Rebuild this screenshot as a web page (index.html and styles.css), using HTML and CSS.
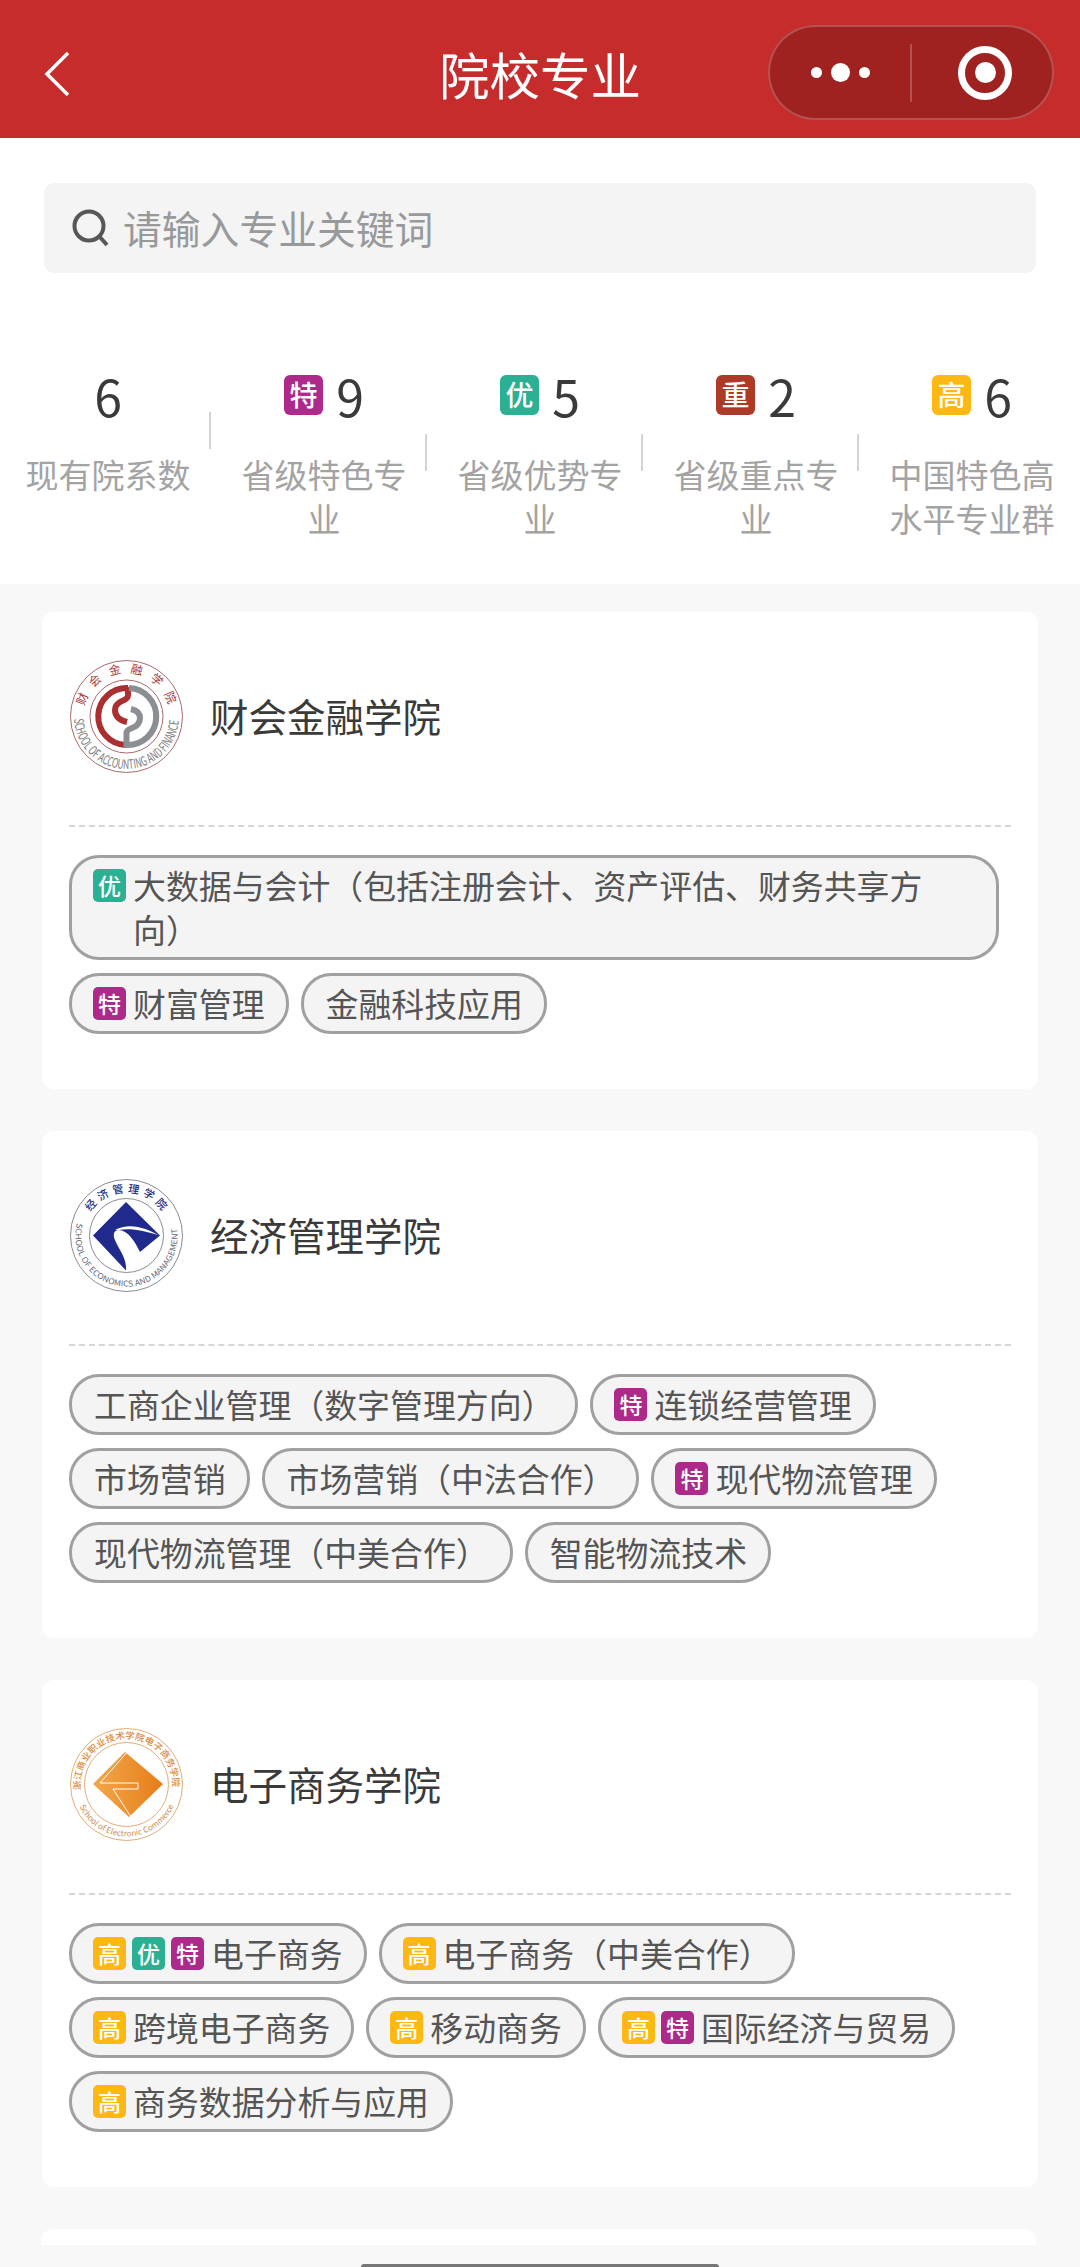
FILE: index.html
```html
<!DOCTYPE html>
<html lang="zh-CN">
<head>
<meta charset="utf-8">
<title>院校专业</title>
<link rel="stylesheet" href="styles.css">
</head>
<body>
<div class="page">
  <header class="nav">
    <div class="nav-left">
      <svg class="back" viewBox="0 0 26 46"><path d="M24 2 L3 23 L24 44"/></svg>
    </div>
    <h1 class="nav-title">院校专业</h1>
    <div class="nav-right">
      <div class="capsule">
        <div class="cap-dots"><i class="dot-s"></i><i class="dot-l"></i><i class="dot-s"></i></div>
        <i class="cap-div"></i>
        <div class="cap-target"><i class="target-ring"><i class="target-core"></i></i></div>
      </div>
    </div>
  </header>

  <section class="top">
    <div class="search">
      <svg class="search-icon" viewBox="0 0 38 38"><circle cx="17" cy="17" r="14.5"/><path d="M27 27 L35 36"/></svg>
      <span class="search-text">请输入专业关键词</span>
    </div>
    <div class="stats">
      <div class="stat">
        <div class="stat-body">
          <div class="stat-num"><span class="digit">6</span></div>
          <div class="stat-label">现有院系数</div>
        </div>
        <i class="stat-div"></i>
      </div>
      <div class="stat">
        <div class="stat-body">
          <div class="stat-num"><b class="sbadge te">特</b><span class="digit">9</span></div>
          <div class="stat-label">省级特色专业</div>
        </div>
        <i class="stat-div"></i>
      </div>
      <div class="stat">
        <div class="stat-body">
          <div class="stat-num"><b class="sbadge you">优</b><span class="digit">5</span></div>
          <div class="stat-label">省级优势专业</div>
        </div>
        <i class="stat-div"></i>
      </div>
      <div class="stat">
        <div class="stat-body">
          <div class="stat-num"><b class="sbadge zhong">重</b><span class="digit">2</span></div>
          <div class="stat-label">省级重点专业</div>
        </div>
        <i class="stat-div"></i>
      </div>
      <div class="stat">
        <div class="stat-body">
          <div class="stat-num"><b class="sbadge gao">高</b><span class="digit">6</span></div>
          <div class="stat-label">中国特色高水平专业群</div>
        </div>
      </div>
    </div>
  </section>

  <main class="list">
    <article class="card">
      <div class="card-head">
        <svg class="logo" viewBox="0 0 115 115">
          <defs>
            <path id="l1top" d="M15.3 47 A43.5 43.5 0 0 1 99.7 47"/>
            <path id="l1bot" d="M5.060 60 A52.500 52.500 0 0 0 109.940 60"/>
          </defs>
          <circle class="ring-a" cx="57.500" cy="57.500" r="56"/>
          <circle class="ring-a" cx="57.500" cy="57.500" r="36.500"/>
          <text class="l1-cn"><textPath href="#l1top" textLength="114" lengthAdjust="spacing">财会金融学院</textPath></text>
          <text class="l1-en"><textPath href="#l1bot" textLength="158" lengthAdjust="spacingAndGlyphs">SCHOOL OF ACCOUNTING AND FINANCE</textPath></text>
          <path class="s-red" d="M59 29 A28.500 28.500 0 0 0 56.500 86 M59 28 V36 Q59 40 53 42 Q46 45 46 51 Q46 60 58 63"/>
          <path class="s-gray" d="M60 29 A28.500 28.500 0 0 1 57.500 86 V74 Q57.500 71 63 69 Q71 66 71 59 Q71 52 62 50"/>
        </svg>
        <h2 class="card-title">财会金融学院</h2>
      </div>
      <div class="tags">
        <div class="tag"><b class="badge you">优</b><span class="tag-text">大数据与会计（包括注册会计、资产评估、财务共享方向）</span></div>
        <div class="tag"><b class="badge te">特</b><span class="tag-text">财富管理</span></div>
        <div class="tag"><span class="tag-text">金融科技应用</span></div>
      </div>
    </article>

    <article class="card">
      <div class="card-head">
        <svg class="logo" viewBox="0 0 115 115">
          <defs>
            <path id="l2top" d="M21.500 34 A43 43 0 0 1 93.500 34"/>
            <path id="l2bot" d="M8.100 45 A51 51 0 1 0 106.900 45"/>
          </defs>
          <circle class="ring-b" cx="57.500" cy="57.500" r="56"/>
          <circle class="ring-b" cx="57.500" cy="57.500" r="37"/>
          <text class="l2-cn"><textPath href="#l2top" textLength="84" lengthAdjust="spacing">经济管理学院</textPath></text>
          <text class="l2-en"><textPath href="#l2bot" textLength="180" lengthAdjust="spacingAndGlyphs">SCHOOL OF ECONOMICS AND MANAGEMENT</textPath></text>
          <path class="navy" d="M24 57.500 L57 24 L91 57.500 L71 74 C66 64 60 53 50 52 C44 52 44 58 46 62 C50 72 58 80 57 92.500 Z"/>
          <path class="swoosh" d="M46 52 C60 44 78 50 90 57.500 C76 53 62 50 50 52 Z"/>
        </svg>
        <h2 class="card-title">经济管理学院</h2>
      </div>
      <div class="tags">
        <div class="tag"><span class="tag-text">工商企业管理（数字管理方向）</span></div>
        <div class="tag"><b class="badge te">特</b><span class="tag-text">连锁经营管理</span></div>
        <div class="tag"><span class="tag-text">市场营销</span></div>
        <div class="tag"><span class="tag-text">市场营销（中法合作）</span></div>
        <div class="tag"><b class="badge te">特</b><span class="tag-text">现代物流管理</span></div>
        <div class="tag"><span class="tag-text">现代物流管理（中美合作）</span></div>
        <div class="tag"><span class="tag-text">智能物流技术</span></div>
      </div>
    </article>

    <article class="card">
      <div class="card-head">
        <svg class="logo" viewBox="0 0 115 115">
          <defs>
            <linearGradient id="l3grad" x1="0" x2="1" y1="0" y2="0">
              <stop offset="0" stop-color="#f2a84c"/>
              <stop offset="1" stop-color="#e67d18"/>
            </linearGradient>
            <path id="l3top" d="M11.800 63 A46 46 0 1 1 103.200 63"/>
            <path id="l3bot" d="M7.600 72 A52 52 0 0 0 107.400 72"/>
          </defs>
          <circle class="ring-c" cx="57.500" cy="57.500" r="56"/>
          <circle class="ring-c" cx="57.500" cy="57.500" r="42"/>
          <text class="l3-cn"><textPath href="#l3top" textLength="152" lengthAdjust="spacingAndGlyphs">浙江商业职业技术学院电子商务学院</textPath></text>
          <text class="l3-en"><textPath href="#l3bot" startOffset="8" textLength="118" lengthAdjust="spacing">School of Electronic Commerce</textPath></text>
          <path class="dia" d="M24 57 L56 25 L94 57 L60 90 Z"/>
          <path class="dia-line" d="M60 23 L31 56 H69 V62 H44 L62 90"/>
        </svg>
        <h2 class="card-title">电子商务学院</h2>
      </div>
      <div class="tags">
        <div class="tag"><b class="badge gao">高</b><b class="badge you">优</b><b class="badge te">特</b><span class="tag-text">电子商务</span></div>
        <div class="tag"><b class="badge gao">高</b><span class="tag-text">电子商务（中美合作）</span></div>
        <div class="tag"><b class="badge gao">高</b><span class="tag-text">跨境电子商务</span></div>
        <div class="tag"><b class="badge gao">高</b><span class="tag-text">移动商务</span></div>
        <div class="tag"><b class="badge gao">高</b><b class="badge te">特</b><span class="tag-text">国际经济与贸易</span></div>
        <div class="tag"><b class="badge gao">高</b><span class="tag-text">商务数据分析与应用</span></div>
      </div>
    </article>

    <div class="card-stub"></div>
  </main>
  <i class="home-bar"></i>
</div>
</body>
</html>
```
FILE: styles.css
```css
* { box-sizing: border-box; }
html, body { margin: 0; padding: 0; }
body {
  background: #f8f8f8;
  font-family: "Noto Sans CJK SC", "Noto Sans", sans-serif;
}
i, b { display: block; font-style: normal; }
.page { position: relative; width: 1080px; height: 2267px; overflow: hidden; background: #f8f8f8; }

/* nav */
.nav {
  height: 138px;
  background: #c62c2b;
  display: grid;
  grid-template-columns: 1fr auto 1fr;
  align-items: center;
}
.nav-left { padding-left: 44px; display: flex; margin-top: 9px; }
.back { width: 26px; height: 46px; }
.back path { fill: none; stroke: #fff; stroke-width: 3.5; }
.nav-title { margin: 8px 0 0; font-size: 50.500px; font-weight: 400; color: #fff; line-height: 60px; }
.nav-right { display: flex; justify-content: flex-end; padding-right: 26px; }
.capsule {
  width: 286px;
  height: 95px;
  margin-top: 7px;
  border: 2px solid rgba(255, 255, 255, .22);
  border-radius: 48px;
  background: #a02220;
  display: flex;
  align-items: center;
}
.cap-dots { width: 140px; display: flex; align-items: center; justify-content: center; gap: 9px; }
.dot-s { width: 11px; height: 11px; border-radius: 50%; background: #fff; }
.dot-l { width: 19px; height: 19px; border-radius: 50%; background: #fff; }
.cap-div { width: 2px; height: 58px; background: rgba(255, 255, 255, .22); }
.cap-target { flex: 1; display: flex; justify-content: center; padding-left: 6px; }
.target-ring {
  width: 54px;
  height: 54px;
  border: 7px solid #fff;
  border-radius: 50%;
  display: flex;
  align-items: center;
  justify-content: center;
}
.target-core { width: 21px; height: 21px; border-radius: 50%; background: #fff; }

/* top */
.top { background: #fff; height: 446px; padding-top: 45px; }
.search {
  margin: 0 44px;
  height: 90px;
  border-radius: 10px;
  background: #f4f4f4;
  display: flex;
  align-items: center;
  padding-left: 28px;
}
.search-icon { width: 38px; height: 38px; margin-top: 0; }
.search-icon circle, .search-icon path { fill: none; stroke: #575757; stroke-width: 4; }
.search-text { margin-left: 13px; margin-top: -2px; font-size: 38.800px; line-height: 50px; color: #97999b; }

.stats { display: flex; padding-top: 92px; align-items: flex-start; }
.stat { width: 216px; display: flex; align-items: center; }
.stat-body { flex: none; width: 216px; padding: 0 20px; margin-right: -7px; }
.stat-div { width: 2px; height: 37px; background: #d3d3d3; margin-top: 0; }
.stat-num { height: 60px; display: flex; align-items: center; justify-content: center; gap: 13px; }
.digit { font-size: 50px; line-height: 60px; font-weight: 400; color: #3a3a3a; }
.sbadge {
  width: 39px;
  height: 40px;
  border-radius: 6px;
  color: #fff;
  font-size: 28px;
  font-weight: 500;
  line-height: 39px;
  text-align: center;
}
.stat-label {
  margin-top: 27px;
  font-size: 33px;
  line-height: 44px;
  color: #a3a3a3;
  text-align: center;
}
.te { background: #ad2a8a; }
.you { background: #2bb094; }
.zhong { background: #ad3a26; }
.gao { background: #fdb813; }

/* cards */
.list { padding: 28px 42px 0; display: flex; flex-direction: column; gap: 42px; }
.card { background: #fff; border-radius: 12px; padding: 48px 27px 55px; }
.card-head {
  display: flex;
  align-items: center;
  height: 167px;
  padding-bottom: 53px;
  border-bottom: 2px dashed #d6d6d6;
}
.logo { width: 115px; height: 115px; flex: none; }
.card-title { margin: -2px 0 0 26px; font-size: 38.500px; font-weight: 400; line-height: 50px; color: #3a3a3a; }

.tags { display: flex; flex-wrap: wrap; gap: 13px 12px; padding-top: 28px; padding-right: 12px; align-items: flex-start; }
.tag {
  display: flex;
  align-items: flex-start;
  gap: 6px;
  border: 3px solid #a0a0a0;
  border-radius: 30px;
  background: #f4f4f4;
  padding: 5px 21px 6px;
}
.badge {
  flex: none;
  width: 33px;
  height: 33px;
  margin-top: 6px;
  border-radius: 5px;
  color: #fff;
  font-size: 23px;
  font-weight: 500;
  line-height: 32px;
  text-align: center;
}
.tag-text { margin-left: 1px; font-size: 32.900px; line-height: 44px; color: #555; text-spacing-trim: space-all; }
.card-stub { height: 16px; margin-right: 2px; margin-left: -1px; background: #fff; border-radius: 12px 12px 0 0; }

.home-bar {
  position: absolute;
  left: 361px;
  bottom: 0;
  width: 358px;
  height: 3px;
  border-radius: 3px 3px 0 0;
  background: #777;
}

/* logos */
.ring-a, .ring-b, .ring-c { fill: none; stroke-width: 1; }
.ring-a { stroke: #a9686c; }
.ring-b { stroke: #8a8a98; }
.ring-c { stroke: #e3ad78; }
.l1-cn { font-size: 12px; fill: #a8393d; }
.l1-en { font-size: 13px; fill: #7d7d7d; }
.l2-cn { font-size: 11px; font-weight: 500; fill: #2a2f80; }
.l2-en { font-size: 8px; fill: #66667a; }
.l3-cn { font-size: 9px; font-weight: 500; fill: #d98a3d; }
.l3-en { font-size: 8px; fill: #c98a4e; }
.s-red, .s-gray { fill: none; stroke-width: 6; }
.s-red { stroke: #a92f31; }
.s-gray { stroke: #8b8e92; }
.navy { fill: #1f2a8c; }
.swoosh { fill: #fff; }
.dia { fill: url(#l3grad); }
.dia-line { fill: none; stroke: #fff; stroke-width: 1; }
```
